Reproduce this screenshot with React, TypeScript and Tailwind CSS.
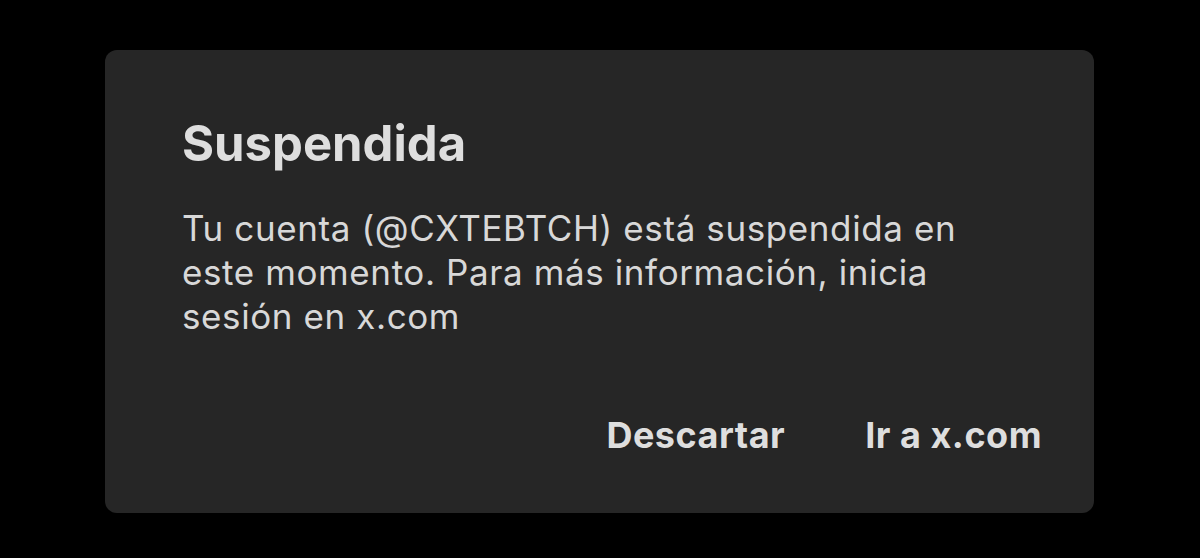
export default function App() {
  return (
    <div className="w-[1200px] h-[558px] bg-black pt-[50px] pl-[105px] font-['Inter',sans-serif]">
      <div className="w-[989px] h-[463px] rounded-[12px] bg-[#262626] pl-[77px] pr-[52px] pt-[65px] flex flex-col">
        <h1 className="text-[#dedede] text-[49px] leading-[58px] font-bold">
          Suspendida
        </h1>
        <p className="mt-[33px] text-[#d8d8d8] text-[35px] leading-[44px] tracking-[0.6px] w-[800px]">
          Tu cuenta (@CXTEBTCH) está suspendida en este momento. Para más
          información, inicia sesión en x.com
        </p>
        <div className="mt-auto mb-[56px] flex justify-end gap-[80px] text-[#dedede] text-[36px] leading-[44px] tracking-[0.5px] font-bold">
          <button>Descartar</button>
          <button>Ir a x.com</button>
        </div>
      </div>
    </div>
  );
}
